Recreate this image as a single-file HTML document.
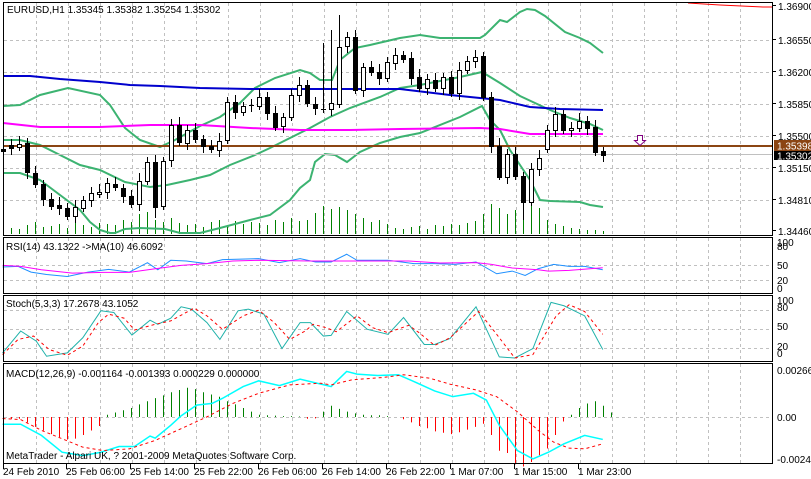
<!DOCTYPE html>
<html><head><meta charset="utf-8"><style>
html,body{margin:0;padding:0;background:#fff;width:811px;height:479px;overflow:hidden}
svg{display:block}
text{font-family:"Liberation Sans",sans-serif;font-size:10px;fill:#000}
</style></head><body>
<svg id="s" width="811" height="479" xmlns="http://www.w3.org/2000/svg">
<rect x="0" y="0" width="811" height="479" fill="#fff"/>
<g id="grid" stroke="#c0c0c0" stroke-dasharray="3,3" stroke-width="1"></g>
<g id="main"></g>
<g id="z" transform="translate(0,230) scale(0.5174,0.3367)" fill="none"></g>
<g id="fr" fill="none" stroke="#000" stroke-width="1">
<rect x="3.5" y="2.5" width="769" height="233"/>
<rect x="3.5" y="237.5" width="769" height="56"/>
<rect x="3.5" y="295.5" width="769" height="66"/>
<rect x="3.5" y="363.5" width="769" height="100"/>
</g>
<g id="tx"></g>
</svg>
<script>
const NS="http://www.w3.org/2000/svg";
function el(p,t,a,txt){const e=document.createElementNS(NS,t);for(const k in a)e.setAttribute(k,a[k]);if(txt!==undefined)e.textContent=txt;document.getElementById(p).appendChild(e);return e;}
// grid verticals
for(let x=36;x<772;x+=32){el('grid','line',{x1:x+.5,y1:3,x2:x+.5,y2:235});el('grid','line',{x1:x+.5,y1:238,x2:x+.5,y2:293});el('grid','line',{x1:x+.5,y1:296,x2:x+.5,y2:361});el('grid','line',{x1:x+.5,y1:364,x2:x+.5,y2:463});}
[40,72,104,136,168,200].forEach(y=>el('grid','line',{x1:4,y1:y+.5,x2:772,y2:y+.5}));
[265,280].forEach(y=>el('grid','line',{x1:4,y1:y+.5,x2:772,y2:y+.5}));
[310,329,348].forEach(y=>el('grid','line',{x1:4,y1:y+.5,x2:772,y2:y+.5}));
el('grid','line',{x1:4,y1:417.5,x2:772,y2:417.5});
// volumes
const vh=[8,6,5,9,12,7,8,10,6,12,9,7,11,10,9,14,12,20,22,14,12,16,11,9,10,7,12,14,9,13,10,12,11,9,14,12,16,13,14,21,28,25,27,24,20,16,12,14,10,6,5,7,8,5,9,8,10,9,11,13,20,30,26,20,24,24,28,26,14,10,8,6,5,4,4,3];
vh.forEach((h,i)=>{const x=3.5+8*i;el('main','line',{x1:x,y1:234,x2:x,y2:234-h,stroke:'#008000'});});
function pl(g,pts,st,w,extra){el(g,'polyline',Object.assign({points:pts,fill:'none',stroke:st,'stroke-width':w},extra||{}));}
// bands
pl('main',"3,106 20,105 40,95 68,88 100,95 110,105 125,128 140,140 160,147 175,140 200,126 220,117 240,103 255,88 275,78 300,70 310,73 320,80 332,80 340,60 355,48 370,45 400,38 420,35 440,38 480,38 485,35 500,20 507,22 520,12 527,9 535,10 545,16 565,32 580,38 590,43 603,53",'#3cb371',2);
pl('main',"3,140 20,140 40,145 60,155 80,165 100,170 125,182 150,187 167,185 190,180 210,175 230,165 255,155 270,148 290,138 310,128 330,117 350,108 380,97 400,88 420,85 460,77 482,72 500,83 520,96 535,103 550,110 570,118 590,124 603,130",'#3cb371',2);
pl('main',"3,173 20,173 40,180 60,195 80,210 90,222 100,230 110,233 115,233 125,229 140,228 165,229 180,233 200,233 220,228 250,220 270,215 290,200 300,188 310,180 315,162 325,154 335,155 347,162 360,152 380,143 400,137 420,133 460,117 482,106 490,120 500,130 510,150 520,165 530,180 540,200 550,201 580,202 590,205 603,207",'#3cb371',2);
pl('main',"3,76 30,76 60,79 100,82 130,85 160,86 200,88 250,89 300,89 350,89 400,89 450,95 480,98 500,100 530,107 560,109 603,110",'#0000cd',2);
pl('main',"3,123 40,127 100,127 150,125 200,125 250,128 300,130 350,130 400,129 480,128 500,129 530,134 560,134 603,134",'#ff00ff',2);
el('main','line',{x1:4,y1:154.5,x2:772,y2:154.5,stroke:'#c0c0c0'});
el('main','line',{x1:4,y1:146,x2:772,y2:146,stroke:'#8b4513','stroke-width':2});
pl('main',"688,3 720,5 763,7 772,7",'#ff0000',1);
el('main','path',{d:"M637.5,135.5 h5 v5 h3 l-5.5,5 l-5.5,-5 h3 z",fill:'#fff',stroke:'#800080'});
// candles [open,close]
const C=[[149,151],[145,148],[147,144],[143,172],[173,184],[184,199],[199,206],[205,208],[208,216],[216,207],[208,200],[200,193],[194,192],[192,183],[184,187],[188,196],[196,204],[204,181],[181,162],[162,207],[206,161],[160,125],[125,142],[143,130],[130,139],[139,146],[146,149],[150,141],[140,102],[102,112],[112,106],[105,105],[106,97],[97,113],[113,127],[126,117],[117,95],[95,85],[85,103],[104,108],[109,109],[109,103],[104,47],[46,37],[37,90],[90,67],[67,72],[72,78],[78,62],[63,55],
[55,59],[58,78],[77,88],[88,79],[80,88],[88,77],[77,93],[93,70],[70,61],[61,57],[56,97],[97,146],[146,177],[177,154],[154,176],[176,202],[202,169],[169,158],[149,130],[130,114],[114,130],[130,128],[128,121],[121,128],[127,152],[151,155]];
const HL={42:15,19:218,40:43,41:30,65:220,61:92,62:180};
C.forEach((c,i)=>{const x=3.5+8*i;const top=Math.min(c[0],c[1]),bot=Math.max(c[0],c[1]);let hi=top-4-(i*7%5),lo=bot+4+(i*3%6);if(HL[i]){if(HL[i]<top)hi=HL[i];else lo=HL[i];}
el('main','line',{x1:x,y1:hi,x2:x,y2:lo,stroke:'#000'});
const black=c[1]>c[0];const h=Math.max(bot-top,1);
if(h<=1)el('main','line',{x1:x-2.5,y1:top+.5,x2:x+2.5,y2:top+.5,stroke:'#000'});
else el('main','rect',{x:x-2,y:top+.5,width:4,height:h,fill:black?'#000':'#fff',stroke:'#000'});});
// indicators in zoom coords
const ne={'vector-effect':'non-scaling-stroke'};
pl('z',"5,110 35,108 60,125 90,132 130,138 170,125 210,117 250,125 285,97 305,118 330,90 360,92 400,100 430,88 500,85 540,97 580,85 610,95 640,95 670,72 690,90 750,90 800,100 840,100 880,102 920,95 960,130 990,122 1015,135 1040,115 1070,102 1100,108 1130,108 1165,118",'#1e90ff',1,ne);
pl('z',"5,105 40,108 80,118 140,128 200,126 250,126 300,115 350,105 400,100 450,92 500,90 600,92 700,92 790,92 850,98 920,97 950,102 990,113 1040,118 1060,122 1100,120 1165,112",'#ff00ff',1,ne);
pl('z',"5,365 40,300 70,330 90,375 130,365 160,320 195,240 220,245 255,312 290,268 305,280 330,262 350,228 370,235 400,275 425,325 460,240 480,235 510,250 545,352 580,275 600,275 625,315 640,313 670,242 710,295 750,310 780,260 820,340 840,340 870,322 920,228 965,377 995,380 1030,352 1065,215 1090,225 1130,255 1165,355",'#20b2aa',1,ne);
pl('z',"5,370 35,325 65,315 95,355 130,372 160,345 190,275 210,250 240,262 260,297 300,280 330,270 375,232 400,255 430,295 470,255 500,238 530,275 560,325 590,300 605,280 630,290 650,302 690,255 720,290 750,305 790,283 810,305 840,343 870,320 925,242 955,300 995,380 1030,370 1075,255 1100,222 1130,242 1165,310",'#ff0000',1,Object.assign({'stroke-dasharray':'3,3'},ne));
// MACD histogram
const hv=[-4,-4,-4,-12,-22,-30,-38,-45,-50,-48,-40,-30,-20,5,10,15,20,28,35,42,48,55,60,65,62,55,50,45,35,28,20,12,5,4,3,2,2,1,-4,-3,12,25,18,12,8,5,4,4,2,0,-5,-12,-20,-25,-32,-35,-38,-34,-28,-22,-15,-40,-75,-80,-105,-110,-100,-85,-70,-40,-10,5,20,30,35,25,10];
hv.forEach((v,i)=>{const x=3.5+8*i;if(v===0)return;el('main','line',{x1:x,y1:417,x2:x,y2:417-v*0.45,stroke:v>0?'#008000':'#ff0000'});});
pl('z',"5,577 40,577 80,610 120,660 160,670 195,660 230,643 260,643 290,612 300,618 330,580 350,552 380,520 410,515 430,500 470,465 500,448 540,462 580,443 640,465 670,420 690,428 730,432 770,430 800,450 840,478 875,495 915,485 940,505 965,580 1000,655 1030,680 1060,660 1090,635 1130,610 1165,622",'#00ffff',1.5,ne);
pl('z',"5,560 40,563 80,595 120,620 160,645 200,655 250,650 300,625 350,590 400,555 450,515 500,485 560,460 620,455 640,460 680,445 740,438 780,430 830,440 870,458 920,475 960,495 1000,540 1040,595 1070,630 1100,648 1130,650 1165,635",'#ff0000',1,Object.assign({'stroke-dasharray':'3,3'},ne));
// text
const T=(x,y,s,a)=>el('tx','text',Object.assign({x:x,y:y},a||{}),s);
T(7,13,"EURUSD,H1  1.35345 1.35382 1.35254 1.35302");
[["1.36900",10],["1.36550",44],["1.36200",76],["1.35850",108],["1.35500",140],["1.35150",172],["1.34810",204],["1.34460",235]].forEach(a=>{T(778,a[1],a[0]);el('tx','line',{x1:773,y1:a[1]-4.5,x2:776,y2:a[1]-4.5,stroke:'#000'});});
el('tx','rect',{x:774,y:140,width:37,height:11,fill:'#8b4513'});
T(777,149.5,"1.35398",{style:'fill:#fff'});
el('tx','rect',{x:774,y:151,width:37,height:9,fill:'#000'});
T(777,159.5,"1.35302",{style:'fill:#fff'});
T(6,250,"RSI(14) 43.1322   ->MA(10) 46.6092");
[["100",246],["80",250],["50",269],["20",284],["0",292]].forEach(a=>T(777,a[1],a[0]));
T(6,307,"Stoch(5,3,3) 17.2678 43.1052");
[["100",304],["80",311],["50",330],["20",350],["0",357]].forEach(a=>T(777,a[1],a[0]));
T(6,377,"MACD(12,26,9) -0.001164 -0.001393 0.000229 0.000000");
T(777,374,"0.002663");T(777,421,"0.00");T(777,463,"-0.002485");
T(6,459,"MetaTrader - Alpari UK, ? 2001-2009 MetaQuotes Software Corp.");
[["24 Feb 2010",4],["25 Feb 06:00",67],["25 Feb 14:00",131],["25 Feb 22:00",195],["26 Feb 06:00",259],["26 Feb 14:00",323],["26 Feb 22:00",387],["1 Mar 07:00",451],["1 Mar 15:00",515],["1 Mar 23:00",579]].forEach(a=>{T(a[1]-1,475,a[0]);el('tx','line',{x1:a[1]-0.5,y1:464,x2:a[1]-0.5,y2:469,stroke:'#000'});});
</script>
</body></html>
